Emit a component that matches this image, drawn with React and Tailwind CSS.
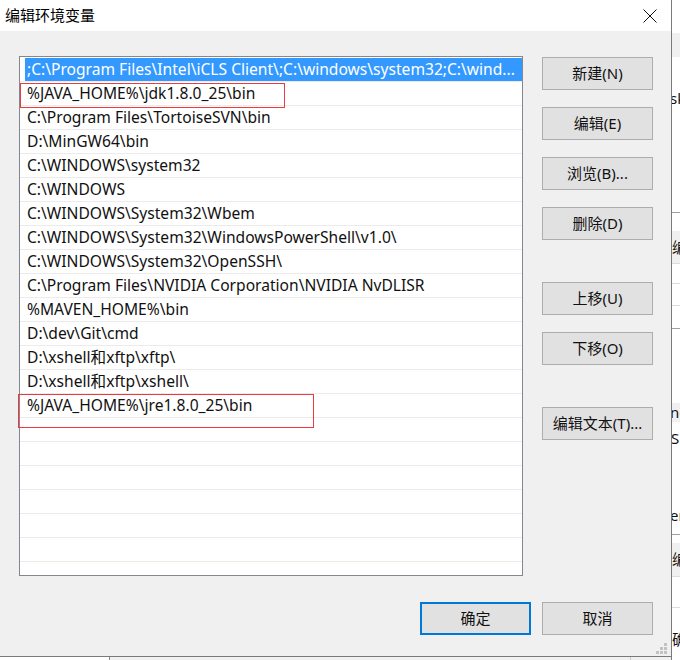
import React from 'react';

const rows = [
    ';C:\\Program Files\\Intel\\iCLS Client\\;C:\\windows\\system32;C:\\wind...',
    '%JAVA_HOME%\\jdk1.8.0_25\\bin',
    'C:\\Program Files\\TortoiseSVN\\bin',
    'D:\\MinGW64\\bin',
    'C:\\WINDOWS\\system32',
    'C:\\WINDOWS',
    'C:\\WINDOWS\\System32\\Wbem',
    'C:\\WINDOWS\\System32\\WindowsPowerShell\\v1.0\\',
    'C:\\WINDOWS\\System32\\OpenSSH\\',
    'C:\\Program Files\\NVIDIA Corporation\\NVIDIA NvDLISR',
    '%MAVEN_HOME%\\bin',
    'D:\\dev\\Git\\cmd',
    'D:\\xshell和xftp\\xftp\\',
    'D:\\xshell和xftp\\xshell\\',
    '%JAVA_HOME%\\jre1.8.0_25\\bin',
    '', '', '', '', '', '',
];

const font = { fontFamily: '"Noto Sans", "Noto Sans CJK SC", sans-serif' };

const Btn = ({ children, className = '', primary }) => (
    <div
        className={
            'w-[111px] h-[33px] flex items-center justify-center text-[15px] text-[#111] bg-[#e1e1e1] ' +
            (primary ? 'border-2 border-[#0078d7] ' : 'border border-[#adadad] ') +
            className
        }
    >
        {children}
    </div>
);

const App = () => {
    return (
        <div className="relative w-[680px] h-[660px] overflow-hidden flex bg-white" style={font}>
            {/* dialog column */}
            <div className="w-[672px] h-[660px] flex flex-col border-r border-[#7a7a7a]">
                <div className="h-[657px] flex flex-col bg-[#f0f0f0] border-b border-[#7a7a7a]">
                    {/* title bar */}
                    <div className="h-[31px] bg-white flex items-center justify-between pl-[5px] pr-[14px]">
                        <span className="text-[15px] text-black leading-none">编辑环境变量</span>
                        <svg width="14" height="14" viewBox="0 0 14 14">
                            <path d="M0.5 0.5 L13.5 13.5 M13.5 0.5 L0.5 13.5" stroke="#111" strokeWidth="1" />
                        </svg>
                    </div>

                    {/* body */}
                    <div className="flex-1 relative pl-[19px] pt-[25px]">
                        <div className="flex gap-[19px]">
                            <div className="w-[504px] h-[520px] bg-white border border-[#828790] pt-[1px] overflow-hidden">
                                {rows.map((r, i) => (
                                    <div key={i} className="h-[24px] border-b border-[#ebebeb] flex">
                                        {i === 0 ? (
                                            <div className="ml-[5px] flex-1 bg-[#3399ff] text-white text-[15.6px] flex items-center pl-[2px] whitespace-nowrap overflow-hidden">
                                                {r}
                                            </div>
                                        ) : (
                                            <div className="ml-[5px] flex-1 text-[#111] text-[15.6px] flex items-center pl-[2px] whitespace-nowrap">
                                                {r}
                                            </div>
                                        )}
                                    </div>
                                ))}
                            </div>

                            <div className="flex flex-col pt-[1px]">
                                <Btn>新建(N)</Btn>
                                <Btn className="mt-[17px]">编辑(E)</Btn>
                                <Btn className="mt-[17px]">浏览(B)...</Btn>
                                <Btn className="mt-[17px]">删除(D)</Btn>
                                <Btn className="mt-[42px]">上移(U)</Btn>
                                <Btn className="mt-[17px]">下移(O)</Btn>
                                <Btn className="mt-[42px]">编辑文本(T)...</Btn>
                            </div>
                        </div>

                        <div className="flex justify-end gap-[11px] pr-[18px] mt-[26px]">
                            <Btn primary>确定</Btn>
                            <Btn>取消</Btn>
                        </div>

                        {/* size grip */}
                        <svg className="absolute right-[3px] bottom-[1px]" width="12" height="12" viewBox="0 0 12 12">
                            <rect x="8" y="0" width="3" height="3" fill="#c2c2c2" />
                            <rect x="4" y="4" width="3" height="3" fill="#c2c2c2" />
                            <rect x="8" y="4" width="3" height="3" fill="#c2c2c2" />
                            <rect x="0" y="8" width="3" height="3" fill="#c2c2c2" />
                            <rect x="4" y="8" width="3" height="3" fill="#c2c2c2" />
                            <rect x="8" y="8" width="3" height="3" fill="#c2c2c2" />
                        </svg>
                    </div>
                </div>
                {/* window behind, bottom edge */}
                <div className="flex-1 flex">
                    <div className="w-[110px] bg-white border-r border-[#8a8a8a]" />
                    <div className="w-[521px] bg-[#f0f0f0] border-r border-[#c8c8c8]" />
                    <div className="flex-1 bg-[#f0f0f0]" />
                </div>
            </div>

            {/* window behind, right edge */}
            <div className="w-[8px] flex flex-col overflow-hidden text-[15px] text-[#111] leading-none whitespace-nowrap">
                <div className="h-[33px] bg-white" />
                <div className="h-[24px] bg-[#f0f0f0]" />
                <div className="h-[155px] bg-white pt-[34px] -ml-[2px]">sk</div>
                <div className="h-[19px] bg-white border-t border-[#a0a0a0]" />
                <div className="h-[32px] bg-[#f0f0f0] flex items-center">编</div>
                <div className="h-[20px] bg-white border-t border-[#dcdcdc]" />
                <div className="h-[22px] bg-white border-t border-[#dcdcdc]" />
                <div className="h-[23px] bg-white border-t border-[#dcdcdc]" />
                <div className="h-[75px] bg-white border-t border-[#a0a0a0]" />
                <div className="h-[19px] bg-[#f0f0f0] -ml-[2px] flex items-center">nc</div>
                <div className="h-[112px] bg-white flex flex-col -ml-[1px]">
                    <span className="mt-[9px]">S</span>
                    <span className="mt-[62px] -ml-[1px]">er</span>
                </div>
                <div className="h-[9px] bg-white border-t border-[#a0a0a0]" />
                <div className="h-[33px] bg-[#f0f0f0] flex items-center">编</div>
                <div className="h-[31px] bg-white border-t border-[#dcdcdc]" />
                <div className="flex-1 bg-white border-t border-[#dcdcdc] pt-[24px]">确</div>
            </div>

            {/* red annotation boxes */}
            <div className="absolute left-[20px] top-[83px] w-[265px] h-[25px] border border-[#ee3a3a]" />
            <div className="absolute left-[18px] top-[394px] w-[296px] h-[34px] border border-[#ee3a3a]" />
        </div>
    );
};

export default App;
